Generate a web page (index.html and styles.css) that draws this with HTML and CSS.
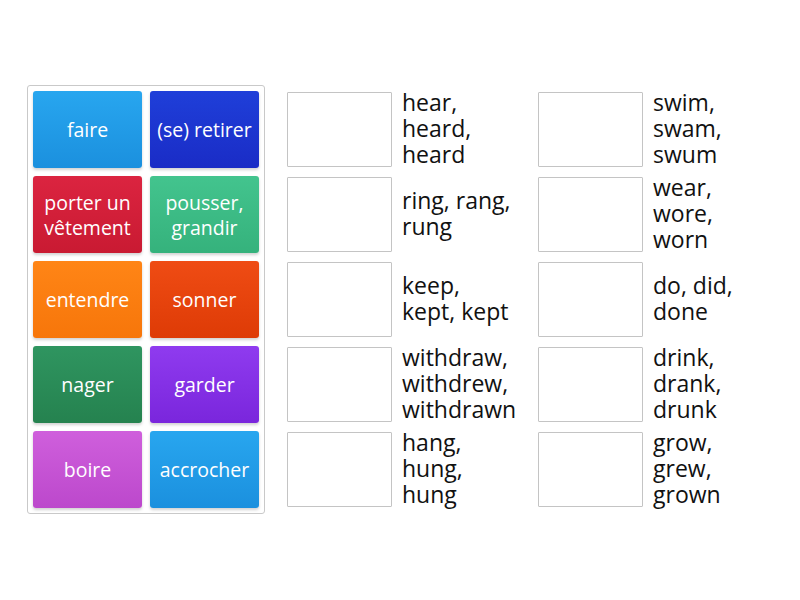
FILE: index.html
```html
<!DOCTYPE html>
<html lang="en">
<head>
    <meta charset="UTF-8">
    <meta name="viewport" content="width=device-width, initial-scale=1.0">
    <title>Match up</title>
    <link rel="stylesheet" href="styles.css">
</head>
<body>
    <div class="game">
        <div class="tray">
            <div class="tile sky">faire</div>
            <div class="tile navy">(se) retirer</div>
            <div class="tile red">porter un vêtement</div>
            <div class="tile mint">pousser, grandir</div>
            <div class="tile orange">entendre</div>
            <div class="tile rust">sonner</div>
            <div class="tile forest">nager</div>
            <div class="tile violet">garder</div>
            <div class="tile pink">boire</div>
            <div class="tile sky">accrocher</div>
        </div>
        <div class="targets">
            <div class="slot"><div class="drop"></div><div class="word">hear, heard, heard</div></div>
            <div class="slot"><div class="drop"></div><div class="word">swim, swam, swum</div></div>
            <div class="slot"><div class="drop"></div><div class="word">ring, rang, rung</div></div>
            <div class="slot"><div class="drop"></div><div class="word">wear, wore, worn</div></div>
            <div class="slot"><div class="drop"></div><div class="word">keep, kept, kept</div></div>
            <div class="slot"><div class="drop"></div><div class="word">do, did, done</div></div>
            <div class="slot"><div class="drop"></div><div class="word">withdraw, withdrew, withdrawn</div></div>
            <div class="slot"><div class="drop"></div><div class="word">drink, drank, drunk</div></div>
            <div class="slot"><div class="drop"></div><div class="word">hang, hung, hung</div></div>
            <div class="slot"><div class="drop"></div><div class="word">grow, grew, grown</div></div>
        </div>
    </div>
</body>
</html>
```

FILE: styles.css
```css
body {
    margin: 0;
    background: #fff;
    font-family: "Open Sans", Arial, sans-serif;
}
.game {
    display: flex;
    align-items: flex-start;
    gap: 22px;
    padding: 85px 0 0 27px;
}
.tray {
    display: grid;
    grid-template-columns: 109px 109px;
    grid-auto-rows: 77px;
    gap: 8px;
    padding: 5px;
    border: 1px solid #c9c9c9;
    border-radius: 3px;
}
.tile {
    display: flex;
    align-items: center;
    justify-content: center;
    text-align: center;
    color: #fff;
    font-size: 19.5px;
    line-height: 25px;
    border-radius: 3px;
    box-shadow: 0 2px 3px rgba(0, 0, 0, 0.18);
    padding: 0 3px;
}
.sky { background: linear-gradient(#28a6ef, #1b90de); }
.navy { background: linear-gradient(#1f3fd9, #1a2cc6); }
.red { background: linear-gradient(#db2440, #c91a32); }
.mint { background: linear-gradient(#43c48e, #35b27c); }
.orange { background: linear-gradient(#ff8516, #f7760a); }
.rust { background: linear-gradient(#ef4c14, #de3b06); }
.forest { background: linear-gradient(#2f9560, #25824f); }
.violet { background: linear-gradient(#8f3bef, #7a26dc); }
.pink { background: linear-gradient(#cf5fdc, #bc48cc); }
.targets {
    display: grid;
    grid-template-columns: 240px 240px;
    grid-auto-rows: 75px;
    gap: 10px 11px;
    padding-top: 7px;
}
.slot {
    display: flex;
    align-items: center;
    gap: 10px;
}
.drop {
    width: 103px;
    height: 73px;
    flex: none;
    border: 1px solid #c4c4c4;
    border-radius: 1px;
}
.word {
    width: 115px;
    margin-bottom: 4px;
    font-size: 23px;
    line-height: 26px;
    color: #111;
}
```
